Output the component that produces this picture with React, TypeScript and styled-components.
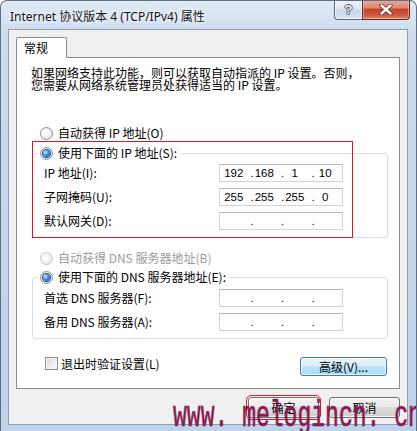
import React from 'react'
import styled, { createGlobalStyle } from 'styled-components'

const GlobalStyle = createGlobalStyle`
  html, body {
    margin: 0;
    padding: 0;
    background: #fff;
  }
  body {
    font-family: 'Noto Sans CJK SC', 'Noto Sans', sans-serif;
    font-size: 12px;
    color: #000;
  }
`

const Window = styled.div`
  position: relative;
  width: 417px;
  height: 431px;
  box-sizing: border-box;
  display: flex;
  flex-direction: column;
  overflow: hidden;
  border: 1px solid #5f6f84;
  border-bottom: none;
  border-radius: 7px 7px 0 0;
  background: linear-gradient(180deg, #dfe9f5 0%, #cddcee 8%, #c3d6ec 60%, #bed2ea 100%);
`

const TitleBar = styled.div`
  height: 28px;
  flex: none;
  display: flex;
  justify-content: space-between;
  align-items: flex-start;
  padding-left: 9px;
`

const Title = styled.div`
  padding-top: 8px;
  font-family: 'Noto Sans', 'Noto Sans CJK SC', sans-serif;
  font-size: 12px;
  line-height: 15px;
  color: #111;
  text-shadow: 0 0 6px #fff, 0 0 3px #fff;
`

const Controls = styled.div`
  display: flex;
  margin-top: -1px;
  margin-right: 6px;
`

const HelpButton = styled.div`
  width: 28px;
  height: 20px;
  box-sizing: border-box;
  border: 1px solid #56677e;
  border-right: none;
  border-top: none;
  border-radius: 0 0 0 4px;
  background: linear-gradient(180deg, #f1f5fa 0%, #dfe8f2 45%, #c9d8e9 50%, #d6e2ef 100%);
  box-shadow: inset 0 0 0 1px rgba(255, 255, 255, 0.7);
  display: flex;
  align-items: center;
  justify-content: center;
  font-family: 'Liberation Sans', sans-serif;
  font-weight: bold;
  font-size: 13px;
  color: #eef1f5;
  text-shadow: 1px 0 0 #4d5c70, -1px 0 0 #4d5c70, 0 1px 0 #4d5c70, 0 -1px 0 #4d5c70;
`

const CloseButton = styled.div`
  width: 48px;
  height: 20px;
  box-sizing: border-box;
  border: 1px solid #5a2a22;
  border-top: none;
  border-radius: 0 0 4px 0;
  background: linear-gradient(180deg, #e9a99c 0%, #dc8a78 40%, #c7452f 50%, #d0573f 80%, #e08a6c 100%);
  box-shadow: inset 0 0 0 1px rgba(255, 220, 210, 0.45);
  display: flex;
  align-items: center;
  justify-content: center;
`

const Body = styled.div`
  flex: 1;
  display: flex;
  flex-direction: column;
  margin: 0 8px 6px 7px;
  padding: 7px 7px 5px 7px;
  border: 1px solid #8c9fb6;
  background: #f0f0f0;
`

const TabStrip = styled.div`
  display: flex;
  height: 20px;
`

const Tab = styled.div`
  position: relative;
  z-index: 1;
  width: 51px;
  height: 21px;
  box-sizing: border-box;
  padding-left: 7px;
  border: 1px solid #898c95;
  border-bottom: none;
  border-radius: 2px 2px 0 0;
  background: #fff;
  line-height: 19px;
  font-size: 12px;
`

const Panel = styled.div`
  display: flex;
  flex-direction: column;
  border: 1px solid #898c95;
  background: #fff;
  padding: 9px 0 12px 0;
`

const Intro = styled.p`
  margin: 0;
  padding-left: 14px;
  font-size: 12px;
  line-height: 12px;
  white-space: nowrap;
`

const OptionRow = styled.label<{ $top: number; $disabled?: boolean }>`
  display: flex;
  align-items: center;
  gap: 5px;
  height: 14px;
  margin: ${(p) => p.$top}px 0 0 23px;
  font-size: 12px;
  line-height: 14px;
  color: ${(p) => (p.$disabled ? '#9a9a9a' : '#000')};
`

const Radio = styled.span<{ $checked?: boolean; $disabled?: boolean }>`
  flex: none;
  width: 13px;
  height: 13px;
  box-sizing: border-box;
  border-radius: 50%;
  border: 1px solid ${(p) => (p.$disabled ? '#c6c8ca' : '#8b8d90')};
  background: ${(p) =>
    p.$disabled
      ? 'radial-gradient(circle at 40% 40%, #fdfdfd, #e6e6e6)'
      : 'radial-gradient(circle at 40% 40%, #ffffff 20%, #d6d8db 100%)'};
  display: flex;
  align-items: center;
  justify-content: center;

  &::after {
    content: '';
    display: ${(p) => (p.$checked ? 'block' : 'none')};
    width: 7px;
    height: 7px;
    border-radius: 50%;
    background: radial-gradient(circle at 35% 35%, #c9ebff 0%, #3f8fdc 45%, #104f9b 100%);
    box-shadow: 0 0 0 1px #1b4f86;
  }
`

const GroupWrap = styled.div<{ $top: number }>`
  position: relative;
  margin-top: ${(p) => p.$top}px;
`

const Highlight = styled.div`
  position: absolute;
  top: 0;
  bottom: 0;
  left: 15px;
  width: 321px;
  box-sizing: border-box;
  border: 1px solid #c8202b;
  pointer-events: none;
`

const Group = styled.fieldset<{ $padTop: number }>`
  margin: 5px 11px 0 15px;
  padding: 0;
  min-width: 0;
  border: 1px solid #d5dfe5;
  border-radius: 3px;

  & > div {
    padding-top: ${(p) => p.$padTop}px;
  }
`

const Legend = styled.legend`
  display: flex;
  align-items: center;
  gap: 5px;
  height: 14px;
  margin-left: 5px;
  padding: 0 3px 0 2px;
  font-size: 12px;
  line-height: 14px;
  background: #fff;
`

const FieldGrid = styled.div`
  display: grid;
  grid-template-columns: 1fr 124px;
  grid-auto-rows: 18px;
  row-gap: 6px;
  align-items: center;
  padding: 0 44px 7px 11px;
`

const FieldLabel = styled.span`
  font-size: 12px;
  line-height: 14px;
`

const IpBox = styled.div`
  height: 18px;
  box-sizing: border-box;
  display: flex;
  align-items: center;
  padding-left: 3px;
  border: 1px solid #cfd3d8;
  border-top-color: #b5b9bf;
  background: #fff;
  font-family: 'Liberation Sans', sans-serif;
  font-size: 11.5px;
`

const Octet = styled.span`
  flex: 1;
  text-align: center;
  padding-right: 6px;
`

const Dot = styled.span`
  width: 3px;
  text-align: center;
`

const FooterRow = styled.div`
  display: flex;
  justify-content: space-between;
  align-items: flex-start;
  margin-top: 18px;
  padding: 0 12px 0 28px;
`

const CheckLabel = styled.label`
  display: flex;
  align-items: center;
  gap: 3px;
  font-size: 12px;
  line-height: 13px;
`

const CheckBox = styled.span`
  width: 13px;
  height: 13px;
  box-sizing: border-box;
  border: 1px solid #8e8f8f;
  background: linear-gradient(135deg, #d3d3d3 0%, #f1f1f1 60%, #fafafa 100%);
  box-shadow: inset 0 0 0 1px #f4f4f4;
`

const Button = styled.button<{ $accent?: boolean; $width: number; $height: number }>`
  width: ${(p) => p.$width}px;
  height: ${(p) => p.$height}px;
  padding: 0;
  border-radius: 3px;
  font-family: 'Noto Sans CJK SC', sans-serif;
  font-size: 12px;
  line-height: 14px;
  color: #000;
  border: 1px solid ${(p) => (p.$accent ? '#3c7fb1' : '#707070')};
  background: ${(p) =>
    p.$accent
      ? 'linear-gradient(180deg, #eaf6fd 0%, #d9f0fc 45%, #bee6fd 50%, #a7d9f5 100%)'
      : 'linear-gradient(180deg, #f2f2f2 0%, #ebebeb 45%, #dddddd 50%, #cfcfcf 100%)'};
  box-shadow: inset 0 0 0 1px rgba(255, 255, 255, 0.75);
`

const OkButton = styled(Button)`
  outline: 1px solid #cf1f2a;
  outline-offset: 1px;
`

const DialogButtons = styled.div`
  display: flex;
  justify-content: flex-end;
  gap: 10px;
  margin-top: 8px;
`

// watermark stamped over the dialog in the source picture
const Watermark = styled.div`
  position: absolute;
  left: 172px;
  top: 398px;
  font-family: 'Liberation Mono', monospace;
  font-size: 36px;
  line-height: 36px;
  color: #8a1b50;
  -webkit-text-stroke: 0.7px #8a1b50;
  white-space: pre;
  transform: scaleX(0.64);
  transform-origin: left top;
  pointer-events: none;
`

const CloseGlyph = () => (
  <svg width="14" height="11" viewBox="0 0 14 11">
    <path d="M2.5 1.5 L11.5 9.5 M11.5 1.5 L2.5 9.5" stroke="#5b2a22" strokeWidth="4.2" strokeLinecap="round" />
    <path d="M2.5 1.5 L11.5 9.5 M11.5 1.5 L2.5 9.5" stroke="#fff" strokeWidth="2.4" strokeLinecap="round" />
  </svg>
)

const IpField = ({ value }: { value?: string[] }) => {
  const parts = value ?? ['', '', '', '']
  return (
    <IpBox>
      {parts.map((part, i) => (
        <React.Fragment key={i}>
          {i > 0 && <Dot>.</Dot>}
          <Octet>{part}</Octet>
        </React.Fragment>
      ))}
    </IpBox>
  )
}

const App = () => {
  return (
    <>
      <GlobalStyle />
      <Window>
        <TitleBar>
          <Title>Internet 协议版本 4 (TCP/IPv4) 属性</Title>
          <Controls>
            <HelpButton>?</HelpButton>
            <CloseButton>
              <CloseGlyph />
            </CloseButton>
          </Controls>
        </TitleBar>

        <Body>
          <TabStrip>
            <Tab>常规</Tab>
          </TabStrip>
          <Panel>
            <Intro>
              如果网络支持此功能，则可以获取自动指派的 IP 设置。否则，
              <br />
              您需要从网络系统管理员处获得适当的 IP 设置。
            </Intro>

            <OptionRow $top={35}>
              <Radio />
              自动获得 IP 地址(O)
            </OptionRow>

            <GroupWrap $top={1}>
              <Group $padTop={4}>
                <Legend>
                  <Radio $checked />
                  使用下面的 IP 地址(S):
                </Legend>
                <FieldGrid>
                  <FieldLabel>IP 地址(I):</FieldLabel>
                  <IpField value={['192', '168', '1', '10']} />
                  <FieldLabel>子网掩码(U):</FieldLabel>
                  <IpField value={['255', '255', '255', '0']} />
                  <FieldLabel>默认网关(D):</FieldLabel>
                  <IpField />
                </FieldGrid>
              </Group>
              <Highlight />
            </GroupWrap>

            <OptionRow $top={13} $disabled>
              <Radio $disabled />
              自动获得 DNS 服务器地址(B)
            </OptionRow>

            <GroupWrap $top={0}>
              <Group $padTop={5}>
                <Legend>
                  <Radio $checked />
                  使用下面的 DNS 服务器地址(E):
                </Legend>
                <FieldGrid>
                  <FieldLabel>首选 DNS 服务器(F):</FieldLabel>
                  <IpField />
                  <FieldLabel>备用 DNS 服务器(A):</FieldLabel>
                  <IpField />
                </FieldGrid>
              </Group>
            </GroupWrap>

            <FooterRow>
              <CheckLabel>
                <CheckBox />
                退出时验证设置(L)
              </CheckLabel>
              <Button $accent $width={87} $height={19}>
                高级(V)...
              </Button>
            </FooterRow>
          </Panel>

          <DialogButtons>
            <OkButton $width={71} $height={21}>
              确定
            </OkButton>
            <Button $width={71} $height={21}>
              取消
            </Button>
          </DialogButtons>
        </Body>

        <Watermark>www. melogincn. cn</Watermark>
      </Window>
    </>
  )
}

export default App
